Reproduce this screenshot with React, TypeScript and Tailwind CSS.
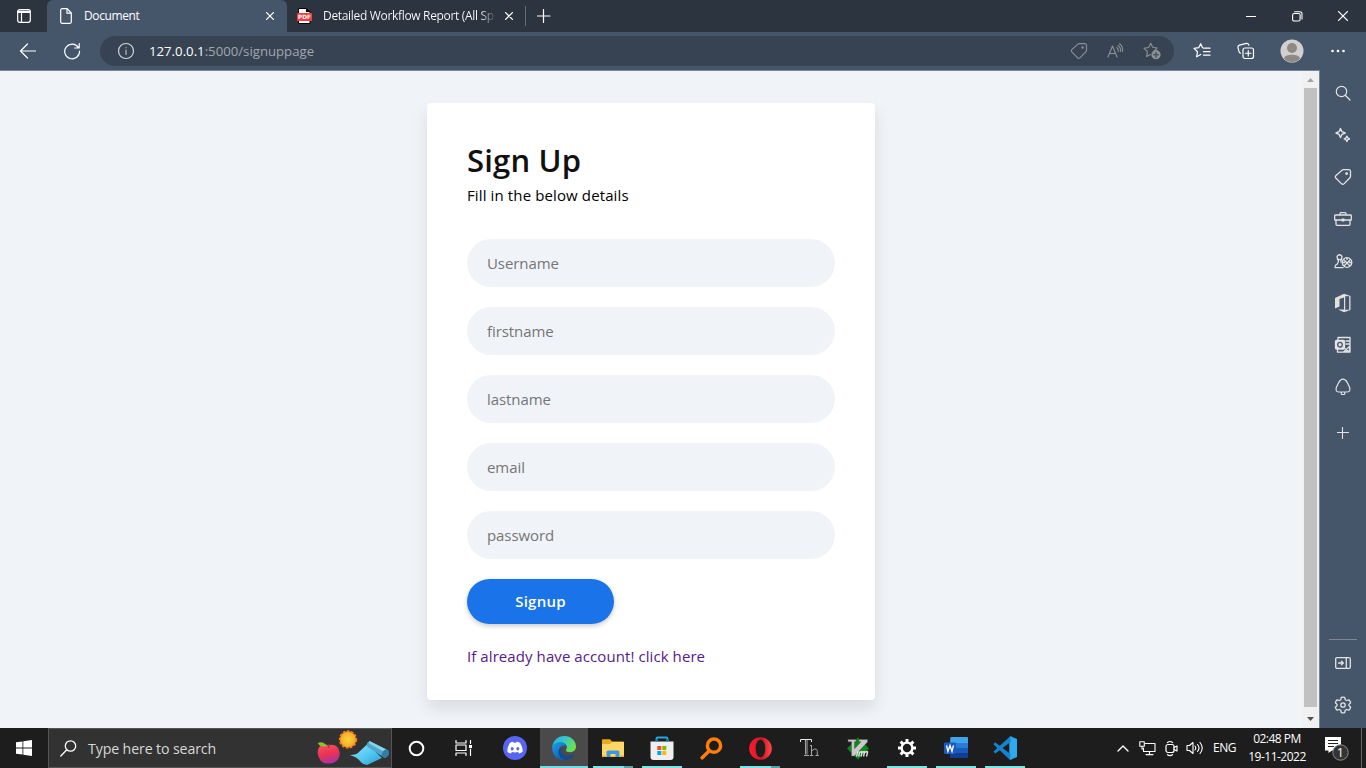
import React from "react";

type IconProps = {
  w?: number;
  h?: number;
  className?: string;
  stroke?: number;
  children: React.ReactNode;
};

function Icon({ w = 18, h, className = "", stroke = 1.1, children }: IconProps) {
  const height = h ?? w;
  return (
    <svg
      width={w}
      height={height}
      viewBox={`0 0 ${w} ${height}`}
      fill="none"
      stroke="currentColor"
      strokeWidth={stroke}
      strokeLinecap="round"
      strokeLinejoin="round"
      className={`block shrink-0 ${className}`}
    >
      {children}
    </svg>
  );
}

const CloseIcon = ({ size = 8 }: { size?: number }) => (
  <Icon w={size} stroke={1.3}>
    <path d={`M.6 .6 ${size - 0.6} ${size - 0.6}M${size - 0.6} .6 .6 ${size - 0.6}`} />
  </Icon>
);

const TagIcon = () => (
  <Icon w={18} stroke={1.3}>
    <path d="M9.6 1.6h5.2a1.7 1.7 0 0 1 1.7 1.7v5a2 2 0 0 1-.6 1.4l-5.7 5.9a2 2 0 0 1-2.8 0L2 10.2a2 2 0 0 1 0-2.8l6-5.2a2 2 0 0 1 1.600-.6z" />
    <circle cx="12.6" cy="5.6" r="0.8" fill="currentColor" />
  </Icon>
);

function TabStrip() {
  return (
    <header className="flex h-8 w-full bg-[#2b343f] text-white">
      <div className="flex w-[47px] items-center pl-[17px]">
        <Icon w={14} stroke={1.2}>
          <rect x=".7" y=".7" width="12.6" height="12.6" rx="2" />
          <path d="M.8 2.4h12.4M1 3.4h12M4.500 3.600v9.600" />
        </Icon>
      </div>
      <div className="flex w-60 items-center rounded-t-[6px] bg-[#45556a] pr-[13px] pl-[13px]">
        <Icon w={12} h={16} stroke={1.2}>
          <path d="M1.6.7h5.6l4.1 4.3v8.9a1.4 1.4 0 0 1-1.4 1.4H2.1a1.4 1.4 0 0 1-1.4-1.4V2A1.3 1.3 0 0 1 1.6.7zM7 .9v4.3h4.1" />
        </Icon>
        <span className="ml-3 flex-1 text-[12px] leading-4 tracking-[-0.4px]">Document</span>
        <CloseIcon />
      </div>
      <div className="flex w-[238px] items-center pr-[12px] pl-[10px]">
        <svg width="15" height="16" viewBox="0 0 15 16" className="shrink-0">
          <path d="M1.5.5h8l3.5 3.5v11.500h-11.500z" fill="#fff" stroke="#000" />
          <path d="M9 .5V4h4z" fill="#000" />
          <rect y="5" width="15" height="8" rx=".6" fill="#fb3a3e" />
          <text x="7.500" y="11.200" textAnchor="middle" fontFamily="DejaVu Sans" fontWeight="bold" fontSize="5.800" fill="#fff">
            PDF
          </text>
        </svg>
        <span className="ml-[11px] w-[174px] bg-gradient-to-r from-white from-[90%] to-[#2b343f] bg-clip-text text-[12px] leading-4 tracking-[-0.32px] whitespace-nowrap text-transparent">
          Detailed Workflow Report (All Sp
        </span>
        <span className="ml-[8px]">
          <CloseIcon />
        </span>
      </div>
      <div className="mt-[6px] h-5 w-px bg-[#626b77]" />
      <div className="flex items-center pl-[11px]">
        <Icon w={14} stroke={1.2}>
          <path d="M6.500 .5v13M0 7h13" />
        </Icon>
      </div>
      <div className="ml-auto flex items-center">
        <div className="flex w-[46px] justify-center">
          <Icon w={10} stroke={1.1}>
            <path d="M0 5.500h10" />
          </Icon>
        </div>
        <div className="flex w-[46px] justify-center">
          <Icon w={11} stroke={1.1}>
            <rect x=".6" y="2.500" width="7.500" height="7.500" rx="1.600" />
            <path d="M2.600.8h5.200a2.200 2.200 0 0 1 2.200 2.200v5" />
          </Icon>
        </div>
        <div className="flex w-[46px] justify-center">
          <CloseIcon size={10} />
        </div>
      </div>
    </header>
  );
}

const starPath = "M7.700 1.200 9.700 5.300l4.400.700-3.200 3.100M7.700 1.200 5.700 5.500.900 6.200l3.500 3.400-.8 5 3.800-2.100";

function Toolbar() {
  return (
    <div className="flex h-[38px] items-center bg-[#45556a] text-white">
      <div className="flex w-[55px] justify-center">
        <Icon w={17} h={16} stroke={1.2}>
          <path d="M16.500 8H1.500M8.500 1l-7 7 7 7" />
        </Icon>
      </div>
      <div className="ml-px flex w-8 justify-center">
        <Icon w={18} stroke={1.200}>
          <path d="M15.500 5.700A7.400 7.400 0 1 0 16.500 9M16.200 1.500v4.500h-4.500" />
        </Icon>
      </div>
      <div className="ml-3 flex h-[30px] w-[1074px] items-center rounded-full bg-[#374353] pl-[17px] text-[#8d9094]">
        <Icon w={18} className="text-[#d3d5d8]" stroke={1.200}>
          <circle cx="9" cy="9" r="7.500" />
          <path d="M9 8v4.500M9 5.500v.3" stroke="#b9bcc0" />
        </Icon>
        <div className="ml-[14px] text-[13.2px] leading-5 text-[#a2a7ad]">
          <span className="text-white">127.0.0.1</span>:5000/signuppage
        </div>
        <div className="ml-auto flex items-center pr-[13px]">
          <Icon w={18} stroke={1.100}>
            <path d="M9.600 1.600h5.200a1.700 1.700 0 0 1 1.700 1.700v5a2 2 0 0 1-.6 1.400l-5.700 5.900a2 2 0 0 1-2.800 0L2 10.200a2 2 0 0 1 0-2.800l6-5.200a2 2 0 0 1 1.600-.6z" />
            <circle cx="12.600" cy="5.600" r=".7" fill="currentColor" />
          </Icon>
          <Icon w={17} className="ml-[19px]" stroke={1.100}>
            <path d="M1 14 5.500 3 10 14M2.600 10.500h5.800M9.700 4.500q2 1.500 1.600 4M11 2.500q3 2 2.500 6M12.500.8q3.700 2.600 3 7.700" />
          </Icon>
          <Icon w={18} className="ml-[19px]" stroke={1.100}>
            <path d={starPath} />
            <circle cx="13" cy="12.700" r="4.600" fill="currentColor" stroke="none" />
            <path d="M13 10.200v5M10.500 12.700h5" stroke="#374353" />
          </Icon>
        </div>
      </div>
      <Icon w={18} className="ml-[19px]" stroke={1.200}>
        <path d="M9.500 5.700 7.700 1.700 5.700 5.700 1 6.400l3.500 3.400-.9 5 4.200-2.300M10.500 6.200h6.500M10.500 9.700h6.500M10.500 13.200h6.500" />
      </Icon>
      <Icon w={18} className="ml-[26px]" stroke={1.200}>
        <rect x="6" y="6" width="10.500" height="10.500" rx="2" />
        <path d="M11.250 8.500v5.500M8.500 11.250H14M3.500 11.200q-1.200-.3-1.500-1.500L1 5.500q-.3-1.800 1.400-2.300l7-1.800q1.500-.3 2.200 1.200l.3.700" />
      </Icon>
      <svg width="24" height="24" viewBox="0 0 24 24" className="ml-[25px]">
        <circle cx="12" cy="12" r="11.500" fill="#d2d0ce" />
        <circle cx="12" cy="9" r="5" fill="#8f8985" />
        <path d="M4 19.800C4 14.500 20 14.500 20 19.800A11.500 11.500 0 0 1 4 19.800z" fill="#8f8985" />
      </svg>
      <Icon w={14} h={4} className="ml-[27px]">
        <g fill="currentColor" stroke="none">
          <circle cx="1.500" cy="2" r="1.300" />
          <circle cx="7" cy="2" r="1.300" />
          <circle cx="12.500" cy="2" r="1.300" />
        </g>
      </Icon>
    </div>
  );
}

function SidebarItem({ children }: { children: React.ReactNode }) {
  return <div className="flex h-[42px] shrink-0 items-center justify-center">{children}</div>;
}

function Sidebar() {
  return (
    <aside className="flex w-[46px] flex-col bg-[#45556a] pt-[2px] text-[#e3e3e3]">
      <SidebarItem>
        <Icon w={16} stroke={1.200}>
          <circle cx="6.500" cy="6.500" r="5.200" />
          <path d="m10.500 10.500 4.500 4.500" />
        </Icon>
      </SidebarItem>
      <SidebarItem>
        <Icon w={16} stroke={1.400}>
          <path d="M5.500 1.500 7 4.700 10.200 6 7 7.400 5.500 10.500 4 7.400 1 6l3-1.300zM11.900 9.200l.8 1.700 1.900.9-1.900.9-.8 1.800-.9-1.800-1.800-.9 1.800-.9z" />
        </Icon>
      </SidebarItem>
      <SidebarItem>
        <TagIcon />
      </SidebarItem>
      <SidebarItem>
        <Icon w={18} h={14} stroke={1.300}>
          <path d="M6 3V1.700q0-1 1-1h4q1 0 1 1V3M1.500 3h15q.8 0 .8.800V8H.7V3.800Q.7 3 1.500 3zM2 8v4.300q0 1 1 1h12q1 0 1-1V8" />
          <rect x="7.600" y="6.500" width="2.800" height="3" fill="currentColor" stroke="none" />
        </Icon>
      </SidebarItem>
      <SidebarItem>
        <Icon w={19} h={17} stroke={1.300}>
          <path d="M9 14.700H1.200q-.6-2.800 2-3.600Q4.600 9 4.500 6.600H3.300M4 6Q2.300 4 3.700 2.500q1.900-1.600 3.600 0Q8.800 4 7 6.100M4.500 6.600h3M7 7v2" />
          <circle cx="13" cy="9.500" r="4.800" />
          <path d="m10 7 5.500 5.500M16 7l-5.500 5.500M13 5v1.500M8.500 9.500h2M15.500 9.500h2" />
        </Icon>
      </SidebarItem>
      <SidebarItem>
        <svg width="18" height="20" viewBox="0 0 18 20">
          <path d="M10 .8 16.500 3v14L10 19.300 4 16.500h6V4.500L5.500 6V13.500L1 15.500V5z" fill="#e3e0dc" />
          <path d="M11.200 3.200h4v13.600h-4z" fill="#45556a" />
        </svg>
      </SidebarItem>
      <SidebarItem>
        <Icon w={18} h={18} stroke={1.300}>
          <path d="M4 4V1.500h12v14.700H3.500v-3M12 5h4M12 8l4 0M9.500 16l6-5.500v5zM10 12l5.500 4" />
          <rect x="1.500" y="4.500" width="9" height="8.500" rx="1" fill="#e3e3e3" />
          <circle cx="6" cy="8.700" r="2.300" stroke="#45556a" />
        </Icon>
      </SidebarItem>
      <SidebarItem>
        <Icon w={16} h={18} stroke={1.200}>
          <path d="M8 1.200Q10.500 1.200 12.300 4.600L14.700 9.500Q15.800 13.800 12.300 14H3.700Q.2 13.800 1.300 9.500L3.700 4.600Q5.500 1.200 8 1.200zM6.300 14v1.800q0 .7.700.7h2q.7 0 .7-.7V14" />
        </Icon>
      </SidebarItem>
      <div className="mt-[19px] flex justify-center">
        <Icon w={12} h={12} stroke={1.100}>
          <path d="M5.500 0v11.500M0 5.500h11.500" />
        </Icon>
      </div>
      <div className="mx-auto mt-auto mb-[2px] h-px w-7 bg-[#7d8896]" />
      <SidebarItem>
        <Icon w={16} h={12} stroke={1.300}>
          <rect x=".7" y=".7" width="14.600" height="10.600" rx="1.200" />
          <path d="M11.300 1v10M3.500 6H8M6.500 4.200 8.300 6 6.500 7.800" />
        </Icon>
      </SidebarItem>
      <SidebarItem>
        <Icon w={18} stroke={1.300}>
          <circle cx="9" cy="9" r="2.200" />
          <path d="M7.300 1.400Q9 .900 10.700 1.400L11.200 3.700 12.600 4.500 14.900 3.800Q16.200 5 16.600 6.700L15 8.400V9.600L16.600 11.300Q16.200 13 14.900 14.200L12.600 13.500 11.200 14.300 10.700 16.600Q9 17.100 7.300 16.600L6.800 14.300 5.400 13.500 3.100 14.200Q1.800 13 1.400 11.300L3 9.600V8.400L1.400 6.700Q1.800 5 3.100 3.800L5.400 4.500 6.800 3.700z" />
        </Icon>
      </SidebarItem>
      <div className="h-[2px] shrink-0" />
    </aside>
  );
}

function Field({ label, type = "text" }: { label: string; type?: string }) {
  return (
    <input
      type={type}
      placeholder={label}
      className="h-12 w-full rounded-full bg-[#f0f4f9] px-5 pb-px text-[15px] tracking-[-0.07px] placeholder:text-[#757575] outline-none"
    />
  );
}

function SignUpCard() {
  return (
    <form className="mt-8 flex h-[597px] w-[448px] flex-col items-start rounded bg-white px-10 pt-9 shadow-[0_8px_16px_rgba(0,0,0,0.1)]">
      <h1 className="h-[43px] text-[31px] leading-[43px] font-semibold tracking-[0.2px] whitespace-nowrap text-[#111]">Sign Up</h1>
      <p className="mt-[2px] h-[23px] text-[15px] leading-[22px] tracking-[0.12px] whitespace-nowrap text-black">
        Fill in the below details
      </p>
      <div className="mt-8 flex w-full flex-col gap-5">
        <Field label="Username" />
        <Field label="firstname" />
        <Field label="lastname" />
        <Field label="email" />
        <Field label="password" type="password" />
      </div>
      <button
        type="button"
        className="mt-5 h-[45px] w-[147px] rounded-full bg-[#1a73e8] text-[15px] font-semibold tracking-[0.25px] text-white shadow-[0_2px_5px_rgba(0,0,0,0.22)]"
      >
        Signup
      </button>
      <a href="#" className="mt-[21px] text-[15px] leading-[22px] tracking-[0.08px] whitespace-nowrap text-[#551a8b]">
        If already have account! click here
      </a>
    </form>
  );
}

function Scrollbar() {
  return (
    <div className="flex w-[17px] flex-col items-center justify-between bg-[#f1f1f1]">
      <svg width="17" height="17" viewBox="0 0 17 17">
        <path d="M5 11 8.500 7 12 11z" fill="#a3a3a3" />
      </svg>
      <div className="w-[13px] flex-1 bg-[#c1c1c1]" />
      <svg width="17" height="21" viewBox="0 0 17 21">
        <path d="M5 10h7l-3.500 4z" fill="#505050" />
      </svg>
    </div>
  );
}

type SlotProps = { children: React.ReactNode; active?: boolean; open?: "one" | "many" };

function Slot({ children, active = false, open }: SlotProps) {
  return (
    <div className={`flex h-10 shrink-0 flex-col items-center ${active ? "ml-px w-12 bg-[#4a4a4a]" : "w-[49px] pr-px"}`}>
      <div className={`flex h-[38px] items-center pt-[2px] ${active ? "" : "pl-[2px]"}`}>{children}</div>
      {active && <div className="h-[2px] w-full bg-[#76d9e6]" />}
      {open === "one" && <div className="ml-[2px] h-[2px] w-10 bg-[#7fe3e3]" />}
      {open === "many" && (
        <div className="ml-[2px] flex h-[2px] w-10">
          <div className="flex-1 bg-[#7fe3e3]" />
          <div className="w-[9px] bg-[#5aa2a4]" />
        </div>
      )}
    </div>
  );
}

function SearchArt() {
  return (
    <svg width="74" height="38" viewBox="0 0 74 38" className="shrink-0">
      <defs>
        <linearGradient id="apple" x1="0" y1="0" x2="0.3" y2="1">
          <stop offset="0" stopColor="#fb5361" />
          <stop offset=".6" stopColor="#e83354" />
          <stop offset="1" stopColor="#b0339b" />
        </linearGradient>
        <linearGradient id="mat" x1="0" y1="0" x2="1" y2="1">
          <stop offset="0" stopColor="#8deaff" />
          <stop offset=".6" stopColor="#4dc4ef" />
          <stop offset="1" stopColor="#3396c6" />
        </linearGradient>
        <radialGradient id="sun">
          <stop offset="0" stopColor="#ffd440" />
          <stop offset="1" stopColor="#f3aa25" />
        </radialGradient>
      </defs>
      <circle cx="31" cy="10.500" r="8.300" fill="#f07e1b" stroke="#f07e1b" strokeWidth="1.800" strokeDasharray="2.600 1.600" />
      <circle cx="31" cy="10.500" r="7.500" fill="url(#sun)" />
      <path d="M11.500 16.500C6 13 .5 17 .7 24c.5 6 4.500 11 10 10.500 5.500.5 11.500-2.500 12-9C23 18 17.500 14 11.500 16.500z" fill="url(#apple)" />
      <path d="M10 17Q3 19 .8 14 6 11.500 10 17z" fill="#8dc22b" />
      <path d="m11.500 19 .5-4" stroke="#765322" />
      <path d="M33 26q7 0 9.500-3.500L50.500 15 65 29l-15 7q-4 0-7-4t-10-6z" fill="url(#mat)" />
      <path d="M52.500 12 71 21.500q2.500 5-3 7.500L50.500 18q-2-4 2-6z" fill="#4ca8cc" />
      <path d="m52.500 12 17 8.500-3 2-14.500-8z" fill="#87d4ea" />
      <ellipse cx="68.500" cy="24.700" rx="3.300" ry="4.300" transform="rotate(25 68.500 24.700)" fill="#327da8" />
    </svg>
  );
}

function Taskbar() {
  return (
    <footer className="flex h-10 w-full bg-[#1d1d1d] text-white">
      <div className="flex w-12 items-center justify-center">
        <svg width="16" height="16" viewBox="0 0 16 16" fill="#fff">
          <path d="M0 2.300 6.500 1.400v6.200H0zM7.300 1.300 16 0v7.600H7.300zM0 8.400h6.500v6.200L0 13.700zM7.300 8.400H16V16l-8.700-1.300z" />
        </svg>
      </div>
      <div className="flex w-[344px] items-center border border-[#555] bg-[#323232] pl-[11px]">
        <Icon w={17} stroke={1.300}>
          <circle cx="10.500" cy="6" r="5.200" />
          <path d="M6.800 9.800.8 16" />
        </Icon>
        <span className="ml-[11px] flex-1 pt-px text-[14.2px] leading-5 tracking-[-0.13px] whitespace-nowrap text-[#d8d8d8]">
          Type here to search
        </span>
        <SearchArt />
      </div>
      <div className="flex w-[47px] items-center justify-center pl-px">
        <Icon w={17} stroke={2}>
          <circle cx="8.500" cy="8.500" r="6.800" />
        </Icon>
      </div>
      <div className="mr-[3px] flex w-12 items-center justify-center">
        <Icon w={17} h={16} stroke={1.200}>
          <path d="M1 .500v2.500h10V.5M1 15.500V13h10v2.500M1 5h10v5.500H1zM15.500.5v3M15.500 9v6.500" />
          <rect x="14" y="5" width="3" height="3" fill="currentColor" stroke="none" />
        </Icon>
      </div>
      <Slot>
        <svg width="24" height="24" viewBox="0 0 24 24">
          <circle cx="12" cy="12" r="12" fill="#5865f2" />
          <path d="M7 6.800q2-.9 3.300-1l.5.900h2.400l.500-.9q1.300.1 3.300 1 3 4.500 2.600 9-1.500 1.300-3.500 1.800l-1-1.500q-3.100.8-6.200 0l-1 1.500q-2-.5-3.500-1.800-.4-4.500 2.600-9z" fill="#fff" />
          <ellipse cx="9.200" cy="12.700" rx="1.500" ry="1.700" fill="#5865f2" />
          <ellipse cx="14.800" cy="12.700" rx="1.500" ry="1.700" fill="#5865f2" />
        </svg>
      </Slot>
      <Slot active>
        <svg width="24" height="24" viewBox="0 0 24 24">
          <defs>
            <linearGradient id="edgeTop" x1="0" y1="0" x2="1" y2=".4">
              <stop offset="0" stopColor="#2ba9e7" />
              <stop offset=".5" stopColor="#32c7d2" />
              <stop offset="1" stopColor="#69e052" />
            </linearGradient>
            <linearGradient id="edgeLeft" x1="0" y1="0" x2=".7" y2="1">
              <stop offset="0" stopColor="#1b9de2" />
              <stop offset="1" stopColor="#0a61bb" />
            </linearGradient>
          </defs>
          <path d="M.2 11C1 4.500 6 0 12.200 0 19 0 24 5 24 10.500c0 3.700-2.700 5.700-5.700 5.700-2.800 0-4.500-1-4.500-2 0-.8 1-1 1-3 0-2.500-2.300-4.700-6-4.700C4 6.500.7 9.500.2 11z" fill="url(#edgeTop)" />
          <path d="M.1 11.500C.5 8 4 6.200 8.300 6.200c3.500 0 6.200 2 6.500 4.500-1-1-2-1.300-3-1.300-2.500 0-5 2.700-5 6.100 0 4 3.200 7.700 7 8.300C6 25 0 19 .1 11.500z" fill="url(#edgeLeft)" />
          <path d="M9.500 11.500c-2.200 5.500 3 10 8.500 8.200 2-.6 3.400-1.400 3.900-1.200.5.200-.200 1.200-1 2C19 22.500 16.500 24 13.500 24 9.500 23.500 6.500 20 6.500 16q0-3 3-4.500z" fill="#124c91" />
        </svg>
      </Slot>
      <Slot open="many">
        <svg width="22" height="19" viewBox="0 0 22 19">
          <path d="M0 1Q0 .3.7.3H8l2 2.200h11q1 0 1 1V18H0z" fill="#e9a91c" />
          <path d="M0 5h8l2-2h12v14.500H0z" fill="#ffd766" />
          <path d="M4.500 18v-5q0-1.500 1.500-1.500h10q1.500 0 1.500 1.500v5h-4v-3h-5v3z" fill="#3b9ade" />
          <path d="M0 16.500h5V18H0zM17 16.500h5V18h-5z" fill="#e7b23a" />
        </svg>
      </Slot>
      <Slot open="one">
        <svg width="24" height="24" viewBox="0 0 24 24">
          <path d="M6.500 7V2.500Q6.500 1.500 7.500 1.500h9q1 0 1 1V7" fill="none" stroke="#26a7e8" strokeWidth="1.800" />
          <path d="M.5 5.500h23V21q0 3-3 3h-17q-3 0-3-3z" fill="#efefef" />
          <path d="M6.500 3v3M17.500 3v3" stroke="#167fc4" strokeWidth="1.800" />
          <path d="M7.300 10h4v4h-4z" fill="#f25022" />
          <path d="M12.300 10h4v4h-4z" fill="#7fba00" />
          <path d="M7.300 15h4v4h-4z" fill="#00a4ef" />
          <path d="M12.300 15h4v4h-4z" fill="#ffb900" />
        </svg>
      </Slot>
      <Slot>
        <svg width="23" height="23" viewBox="0 0 23 23" fill="none" stroke="#ff7e0b">
          <circle cx="14" cy="8.700" r="6.600" strokeWidth="3.500" />
          <path d="m9 14-6.800 6.800" strokeWidth="3.500" strokeLinecap="round" />
        </svg>
      </Slot>
      <Slot open="many">
        <svg width="23" height="23" viewBox="0 0 23 23">
          <defs>
            <linearGradient id="opera" x1="0" y1="0" x2="1" y2="0">
              <stop offset="0" stopColor="#ff1b2d" />
              <stop offset=".55" stopColor="#cf1525" />
              <stop offset="1" stopColor="#fa4b48" />
            </linearGradient>
          </defs>
          <path fillRule="evenodd" d="M11.500.200a11.300 11.300 0 1 0 0 22.600 11.300 11.300 0 1 0 0-22.600zM11.500 2.800c3 0 4.800 3.900 4.800 8.700s-1.800 8.700-4.800 8.700-4.800-3.900-4.800-8.700 1.800-8.700 4.800-8.700z" fill="url(#opera)" />
        </svg>
      </Slot>
      <Slot>
        <svg width="19" height="20" viewBox="0 0 19 20" fill="none" strokeWidth="1">
          <path d="M.5 4V1.500h11V4" stroke="#e8e8e8" />
          <path d="M5.500 2v14.500M7 2v14.500" stroke="#a5a5a5" />
          <path d="M4 17.500h5M10 7.500h2M11.500 8v9.500M9.800 17.500h3.500M12 12.800q2-2.800 4.500-1.500.8.800.8 2.200v4M15.500 17.500h3.300" stroke="#a5a5a5" />
        </svg>
      </Slot>
      <Slot>
        <svg width="22" height="23" viewBox="0 0 22 23">
          <path d="M11 .5 22 11.500 11 22.500 0 11.500z" fill="#078a16" />
          <path d="M1 2.500h8v2.300H7.500v7L14 4.800h-2V2.500h8.500V5L7.500 19H4.500V4.800H1z" fill="#c8c8c8" stroke="#555" strokeWidth=".5" />
          <path d="m11 14-1.500 5.500M12.700 14.500 11.700 19.500M13 15.500q2.500-2 2 0l-1 4M15.500 15.500q2.500-2 2 0l-1 4M18 15.500q3-2 2.500 0l-1 4" fill="none" stroke="#dedede" strokeWidth="1.400" />
        </svg>
      </Slot>
      <Slot open="one">
        <svg width="20" height="20" viewBox="0 0 20 20" fill="none" stroke="#fff">
          <circle cx="10" cy="10" r="5.400" strokeWidth="2.400" />
          <path d="M10 1v3M10 16v3M1 10h3M16 10h3M3.600 3.600l2.200 2.200M14.200 14.200l2.200 2.200M16.400 3.600l-2.200 2.200M5.800 14.200l-2.200 2.200" strokeWidth="3" />
        </svg>
      </Slot>
      <Slot open="one">
        <svg width="24" height="22" viewBox="0 0 24 22">
          <path d="M6.500 0H23q1 0 1 1v5H6z" fill="#41a5ee" />
          <path d="M6 6h18v5H6z" fill="#2b7cd3" />
          <path d="M6 11h18v5H6z" fill="#185abd" />
          <path d="M6 16h18v4q0 1-1 1H6z" fill="#103f91" />
          <rect y="5.500" width="12" height="11.500" rx="1" fill="#185abd" />
          <path d="m2.500 8.300 1.400 6L6 8.500l2 5.800 1.500-6" fill="none" stroke="#fff" strokeWidth="1.400" />
        </svg>
      </Slot>
      <Slot open="one">
        <svg width="24" height="24" viewBox="0 0 24 24">
          <path d="M17 0 24 3v18l-7 3-.7-6V6z" fill="#2ea8ef" />
          <path d="M.5 15.500 2.300 17.500 17.500 6V0zM2 6.300.4 8.200 17 24l.5-6z" fill="#1584ce" />
        </svg>
      </Slot>

      <div className="ml-auto flex items-center">
        <Icon w={12} h={7} stroke={1.400}>
          <path d="m1 6 5-5 5 5" />
        </Icon>
        <Icon w={17} h={15} className="ml-[10px]" stroke={1.100}>
          <path d="M6.500 2.500H16v8H4.500V7M10.500 10.500v3M7 13.600h7M.8.800h4.500v4.500H.8zM3 5.500V8h1.500" />
        </Icon>
        <Icon w={13} h={17} className="ml-[9px]" stroke={1.200}>
          <rect x="1" y="4.500" width="8" height="8" rx="2" />
          <path d="M9 7.500 12 6v5L9 9.500M2.500 2.500q2.500-2 5 0M2.500 14.700q2.500 1.800 5 0" />
        </Icon>
        <Icon w={18} h={14} className="ml-[8px]" stroke={1.100}>
          <path d="M1 4.500h2.500L7 1.500v11L3.500 9.500H1zM9 5q1.500 2 0 4M11.500 3.500q3 3.500 0 7M14 1.500q4.500 5.500 0 11" />
        </Icon>
        <span className="ml-[9px] w-6 text-[12px] tracking-[-0.5px]">ENG</span>
        <div className="ml-[9px] flex w-[62px] flex-col text-center text-[12px] leading-[18px] tracking-[-0.5px] whitespace-nowrap">
          <span>02:48 PM</span>
          <span>19-11-2022</span>
        </div>
        <svg width="25" height="26" viewBox="0 0 25 26" className="ml-[16px]">
          <path d="M1 2h16v13.500H8L4.500 18v-2.500H1z" fill="#fff" />
          <path d="M4 5.500h10M4 8.500h10M4 11.500h6" stroke="#222" />
          <circle cx="16.500" cy="17.500" r="7.700" fill="#343434" stroke="#8d8d8d" />
          <text x="16.300" y="21.900" textAnchor="middle" fontFamily="Open Sans" fontSize="12.500" fill="#fff">
            1
          </text>
        </svg>
        <div className="mr-1 ml-[12px] h-10 w-px bg-[#666]" />
      </div>
    </footer>
  );
}

export default function App() {
  return (
    <div className="flex h-[768px] w-[1366px] flex-col overflow-hidden bg-[#f0f4f9] font-['Open_Sans','Noto_Sans',sans-serif]">
      <TabStrip />
      <Toolbar />
      <div className="flex min-h-0 flex-1">
        <main className="flex flex-1 justify-center border-t border-[#77859a]">
          <SignUpCard />
        </main>
        <div className="flex border-t border-r border-[#77859a]">
          <Scrollbar />
        </div>
        <Sidebar />
      </div>
      <Taskbar />
    </div>
  );
}
